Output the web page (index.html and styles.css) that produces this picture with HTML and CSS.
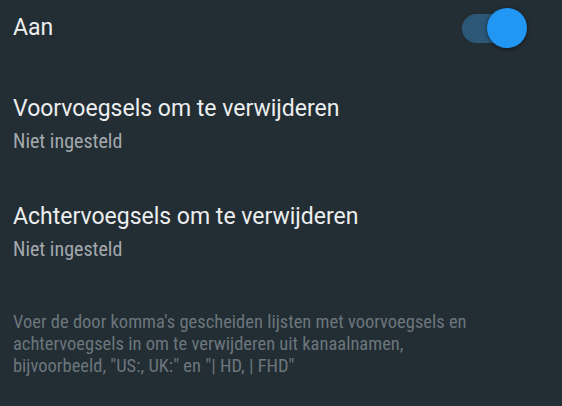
FILE: index.html
```html
<!DOCTYPE html>
<html lang="nl">
<head>
  <meta charset="UTF-8">
  <meta name="viewport" content="width=device-width, initial-scale=1.0">
  <title>Kanaalnamen</title>
  <link rel="stylesheet" href="styles.css">
</head>
<body>
<div class="settings">
  <div class="row switch-row">
    <span class="title">Aan</span>
    <span class="switch"><span class="track"></span><span class="thumb"></span></span>
  </div>

  <div class="row pref">
    <div class="title">Voorvoegsels om te verwijderen</div>
    <div class="summary">Niet ingesteld</div>
  </div>

  <div class="row pref">
    <div class="title">Achtervoegsels om te verwijderen</div>
    <div class="summary">Niet ingesteld</div>
  </div>

  <p class="footer">Voer de door komma's gescheiden lijsten met voorvoegsels en achtervoegsels in om te verwijderen uit kanaalnamen, bijvoorbeeld, "US:, UK:" en "| HD, | FHD"</p>
</div>
</body>
</html>
```

FILE: styles.css
```css
body {
  margin: 0;
  background-color: #232d34;
  font-family: Roboto, "Noto Sans", sans-serif;
  color: #eceeef;
}
.settings {
  padding: 0 13px;
}
.row {
  display: flex;
}
.title {
  font-size: 23px;
  line-height: 28px;
}
.switch-row {
  align-items: center;
  justify-content: space-between;
  height: 56px;
}
.switch {
  position: relative;
  width: 66px;
  height: 42px;
  margin-right: 22px;
}
.track {
  position: absolute;
  left: 1px;
  top: 7px;
  width: 50px;
  height: 29px;
  border-radius: 15px;
  background-color: #2c5878;
}
.thumb {
  position: absolute;
  right: 0;
  top: 1px;
  width: 40px;
  height: 40px;
  border-radius: 50%;
  background-color: #2196f3;
  box-shadow: 0 1px 4px rgba(0, 0, 0, 0.5);
}
.pref {
  flex-direction: column;
  padding-top: 39px;
  padding-bottom: 10px;
}
.summary {
  margin-top: 5px;
  font-family: "Roboto Condensed", Roboto, sans-serif;
  font-size: 20px;
  line-height: 26px;
  color: #a3a9ad;
}
.footer {
  margin: 39px 0 0;
  width: 470px;
  font-family: "Roboto Condensed", Roboto, sans-serif;
  font-size: 18.5px;
  line-height: 22px;
  color: #6c767c;
}
```
